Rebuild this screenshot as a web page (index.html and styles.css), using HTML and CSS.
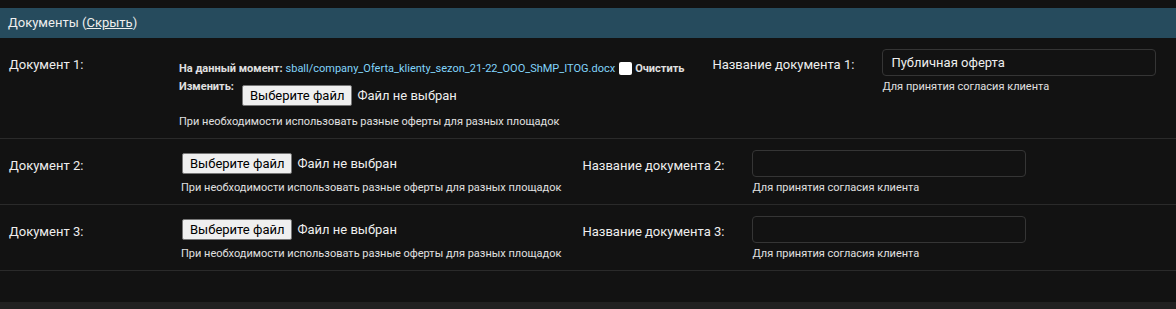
FILE: index.html
```html
<!DOCTYPE html>
<html lang="ru">
<head>
    <meta charset="UTF-8">
    <meta name="viewport" content="width=device-width, initial-scale=1.0">
    <title>Документы</title>
    <link rel="stylesheet" href="styles.css">
</head>
<body>
    <div class="page">
        <fieldset class="module">
            <h2>Документы (<a href="#">Скрыть</a>)</h2>

            <!-- Документ 1: уже загружен -->
            <div class="form-row">
                <div class="field-box">
                    <label class="field-label">Документ 1:</label>
                    <div class="widget">
                        <div class="file-upload">
                            <div class="current">
                                <b>На данный момент:</b>
                                <a href="#" class="file-link">sball/company_Oferta_klienty_sezon_21-22_OOO_ShMP_ITOG.docx</a>
                                <input type="checkbox" class="clear-box" id="clear1">
                                <label for="clear1" class="clear-label">Очистить</label>
                            </div>
                            <div class="change">
                                <b>Изменить:</b>
                                <div class="file-input">
                                    <button type="button" class="file-btn">Выберите файл</button>
                                    <span class="file-name">Файл не выбран</span>
                                </div>
                            </div>
                        </div>
                        <div class="help help-first">При необходимости использовать разные оферты для разных площадок</div>
                    </div>
                </div>
                <div class="field-box">
                    <label class="field-label" for="name1">Название документа 1:</label>
                    <div class="widget">
                        <input type="text" class="text-input" id="name1" value="Публичная оферта">
                        <div class="help">Для принятия согласия клиента</div>
                    </div>
                </div>
            </div>

            <div class="form-row">
                <div class="field-box">
                    <label class="field-label">Документ 2:</label>
                    <div class="widget widget-file">
                        <div class="file-input">
                            <button type="button" class="file-btn">Выберите файл</button>
                            <span class="file-name">Файл не выбран</span>
                        </div>
                        <div class="help">При необходимости использовать разные оферты для разных площадок</div>
                    </div>
                </div>
                <div class="field-box">
                    <label class="field-label" for="name2">Название документа 2:</label>
                    <div class="widget">
                        <input type="text" class="text-input" id="name2">
                        <div class="help">Для принятия согласия клиента</div>
                    </div>
                </div>
            </div>

            <div class="form-row">
                <div class="field-box">
                    <label class="field-label">Документ 3:</label>
                    <div class="widget widget-file">
                        <div class="file-input">
                            <button type="button" class="file-btn">Выберите файл</button>
                            <span class="file-name">Файл не выбран</span>
                        </div>
                        <div class="help">При необходимости использовать разные оферты для разных площадок</div>
                    </div>
                </div>
                <div class="field-box">
                    <label class="field-label" for="name3">Название документа 3:</label>
                    <div class="widget">
                        <input type="text" class="text-input" id="name3">
                        <div class="help">Для принятия согласия клиента</div>
                    </div>
                </div>
            </div>
        </fieldset>

        <div class="submit-row"></div>
    </div>
</body>
</html>
```

FILE: styles.css
```css
body {
    margin: 0;
    background-color: #121212;
    color: #eeeeee;
    font-family: Roboto, "Noto Sans", sans-serif;
}
.page {
    padding-top: 8px;
}
.module {
    border: none;
    margin: 0;
    padding: 0;
    min-width: 0;
}
.module h2 {
    margin: 0;
    padding: 8px;
    font-size: 13px;
    line-height: 14px;
    font-weight: 400;
    background-color: #264b5d;
    color: #eeeeee;
}
.module h2 a {
    color: #eeeeee;
    text-decoration: underline;
}
.form-row {
    display: flex;
    align-items: flex-start;
    padding: 11px 9px 10px;
    border-bottom: 1px solid #2a2a2a;
}
.field-box {
    display: flex;
    flex-shrink: 0;
    align-items: flex-start;
    margin-right: 21px;
    white-space: nowrap;
}
.field-label {
    flex-shrink: 0;
    width: 160px;
    padding: 8px 10px 0 0;
    font-size: 13px;
    line-height: 16px;
    color: #eeeeee;
}
.widget-file {
    padding-left: 2px;
}
.file-upload {
    padding-top: 9px;
    font-size: 11px;
    color: #e0e0e0;
}
.file-upload b {
    font-weight: 700;
}
.current {
    display: flex;
    align-items: center;
    height: 20px;
}
.file-link {
    margin-left: 3px;
    color: #81d4fa;
    text-decoration: none;
}
.clear-box {
    appearance: none;
    flex-shrink: 0;
    width: 13px;
    height: 13px;
    margin: 0 3px 0 4px;
    background: #ffffff;
    border: none;
    border-radius: 2px;
}
.clear-label {
    font-weight: 700;
    padding-right: 7px;
}
.change {
    display: flex;
    align-items: flex-start;
    margin-top: 2px;
}
.change b {
    line-height: 13px;
    margin-right: 7px;
}
.change .file-input {
    margin-top: 2px;
}
.file-input {
    display: flex;
    align-items: center;
    height: 27px;
}
.file-btn {
    box-sizing: border-box;
    height: 21px;
    margin: 0 0 0 1px;
    padding: 0 7px;
    font-family: Roboto, "Noto Sans", sans-serif;
    font-size: 13px;
    color: #000000;
    background-color: #efefef;
    border: 1px solid #767676;
    border-radius: 2px;
}
.file-name {
    margin-left: 5px;
    font-size: 13px;
    color: #eeeeee;
}
.help {
    margin-top: 4px;
    font-size: 11px;
    line-height: 13px;
    color: #e0e0e0;
}
.help-first {
    margin-top: 6px;
}
.text-input {
    display: block;
    box-sizing: border-box;
    width: 274px;
    height: 27px;
    margin: 0;
    padding: 0 8px;
    font-family: Roboto, "Noto Sans", sans-serif;
    font-size: 13px;
    color: #eeeeee;
    background-color: #121212;
    border: 1px solid #353535;
    border-radius: 4px;
}
.submit-row {
    margin-top: 31px;
    height: 8px;
    background-color: #212121;
}
```
